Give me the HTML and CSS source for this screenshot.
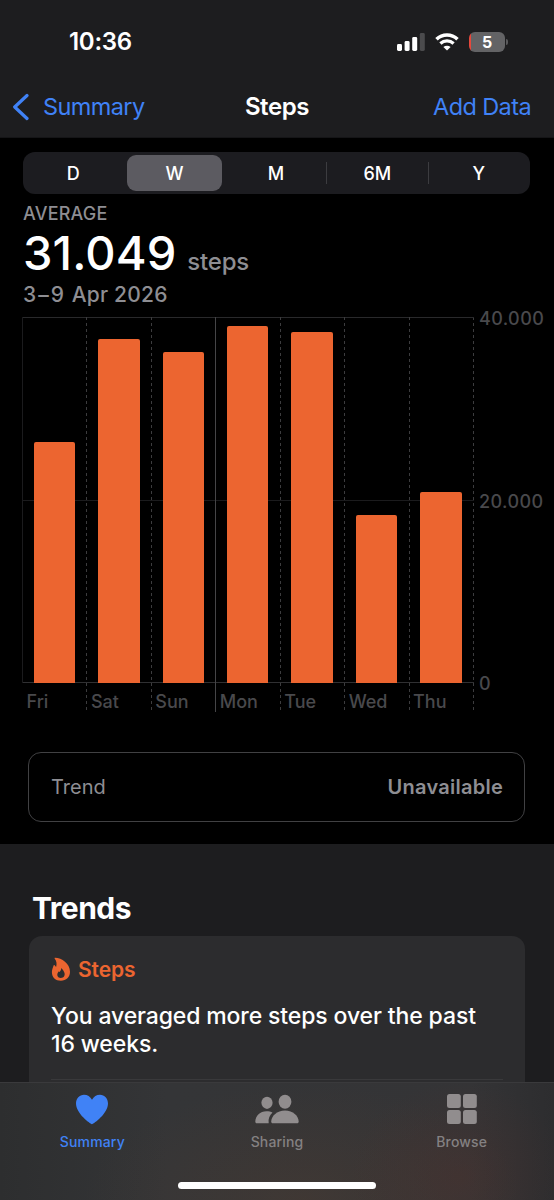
FILE: index.html
```html
<!DOCTYPE html>
<html lang="en">
<head>
    <meta charset="UTF-8">
    <meta name="viewport" content="width=device-width, initial-scale=1.0">
    <title>Steps</title>
    <link rel="stylesheet" href="styles.css">
</head>
<body>
    <div class="phone">
        <header class="top">
            <div class="status-bar">
                <span class="time">10:36</span>
                <div class="status-icons">
                    <svg class="signal" width="28" height="18" viewBox="0 0 28 18">
                        <rect x="0" y="11" width="5" height="7" rx="1.4" fill="#fff"/>
                        <rect x="7.6" y="8" width="5" height="10" rx="1.4" fill="#fff"/>
                        <rect x="15.2" y="4" width="5" height="14" rx="1.4" fill="#fff"/>
                        <rect x="22.8" y="0" width="5" height="18" rx="1.4" fill="#4b4b4d"/>
                    </svg>
                    <svg class="wifi" width="24" height="18" viewBox="0 0 24 18">
                        <path d="M1.5 6.2a15.2 15.2 0 0 1 21 0" fill="none" stroke="#fff" stroke-width="3.6"/>
                        <path d="M5.4 10.5a9.6 9.6 0 0 1 13.2 0" fill="none" stroke="#fff" stroke-width="3.2"/>
                        <path d="M12 17.6l-3.6-3.5a5.2 5.2 0 0 1 7.2 0z" fill="#fff"/>
                    </svg>
                    <div class="battery"><span class="battery-level">5</span></div>
                </div>
            </div>
            <nav class="nav-bar">
                <a class="back">
                    <svg width="17" height="28" viewBox="0 0 17 28"><path d="M15 2.5L2.7 14l12.3 11.5" fill="none" stroke="#4082f6" stroke-width="3.2" stroke-linecap="round" stroke-linejoin="round"/></svg>
                    <span class="back-text">Summary</span>
                </a>
                <h1>Steps</h1>
                <a class="add">Add Data</a>
            </nav>
        </header>

        <main>
            <section class="overview">
                <div class="segments">
                    <button class="segment">D</button>
                    <button class="segment active">W</button>
                    <button class="segment">M</button>
                    <button class="segment divided">6M</button>
                    <button class="segment divided">Y</button>
                </div>

                <div class="summary">
                    <p class="summary-label">AVERAGE</p>
                    <p class="summary-value"><span class="number">31.049</span><span class="unit">steps</span></p>
                    <p class="summary-date"><span class="range">3–9</span> Apr 2026</p>
                </div>

                <div class="chart">
                    <div class="days">
                        <div class="day first"><div class="plot"><div class="bar" style="height: 241px"></div></div><span>Fri</span></div>
                        <div class="day"><div class="plot"><div class="bar" style="height: 344.5px"></div></div><span>Sat</span></div>
                        <div class="day"><div class="plot"><div class="bar" style="height: 331px"></div></div><span>Sun</span></div>
                        <div class="day week-start"><div class="plot"><div class="bar" style="height: 357px"></div></div><span>Mon</span></div>
                        <div class="day"><div class="plot"><div class="bar" style="height: 351px"></div></div><span>Tue</span></div>
                        <div class="day"><div class="plot"><div class="bar" style="height: 168px"></div></div><span>Wed</span></div>
                        <div class="day"><div class="plot"><div class="bar" style="height: 191px"></div></div><span>Thu</span></div>
                    </div>
                    <div class="axis">
                        <span>40.000</span>
                        <span>20.000</span>
                        <span>0</span>
                    </div>
                </div>

                <div class="trend-box">
                    <span>Trend</span>
                    <span class="trend-value">Unavailable</span>
                </div>
            </section>

            <section class="trends">
                <h2>Trends</h2>
                <div class="card">
                    <div class="card-title">
                        <svg width="20" height="25" viewBox="0 0 20 25">
                            <path fill="#ec6530" fill-rule="evenodd" d="M4.2.7C10.6.9 19 6.3 19 14.8c0 5.4-3.8 9-9.1 9S.9 20.3.9 15.3c0-2.7 1-4.5 1.6-6.6.1-.8.8-.8 1.3-.3.5.5.9 1 1.3 1.6C6.1 6.700 5.500 4 3.800 1.800 3.400 1.200 3.500.7 4.200.7zM10.200 11c.3 2-1.200 3.300-1.800 4.100-.4-.5-.7-.8-1.100-.2-2 2.700-.8 6 2.500 6 3.200 0 4.600-2.800 3.500-5.400-.6-1.600-1.800-3.400-3.100-4.500z"/>
                        </svg>
                        <span>Steps</span>
                    </div>
                    <p class="card-text">You averaged more steps over the past<br>16 weeks.</p>
                    <hr>
                </div>
            </section>
        </main>

        <footer class="tab-bar">
            <a class="tab selected">
                <svg width="46" height="32" viewBox="0 0 46 32"><path fill="#4082f6" d="M23 31.2C21 30.6 7 20.5 7 10.5 7 5.3 10.5 1.7 15 1.7c3.5 0 6.3 1.9 8 5 1.7-3.1 4.5-5 8-5 4.5 0 8 3.6 8 8.8 0 10-14 20.1-16 20.7z"/></svg>
                <span>Summary</span>
            </a>
            <a class="tab">
                <svg width="46" height="32" viewBox="0 0 46 32" fill="#918d8e">
                    <ellipse cx="13" cy="9.8" rx="5.6" ry="6.1"/>
                    <ellipse cx="31" cy="8.7" rx="6.4" ry="7"/>
                    <path d="M1.3 28.5C1.5 23 6 18.2 12.5 18.2c2.4 0 4.4.5 6 1.4-2.9 2.7-4.5 6.2-3.8 10.7H3c-1.2 0-1.7-.7-1.7-1.8z"/>
                    <path d="M17.2 28.5c.2-5.8 5.8-11.1 13.800-11.100s13.500 5.300 13.700 11.100c0 1.100-.6 1.800-1.800 1.800H19c-1.200 0-1.800-.7-1.800-1.800z"/>
                </svg>
                <span>Sharing</span>
            </a>
            <a class="tab">
                <svg width="46" height="32" viewBox="0 0 46 32" fill="#918d8e">
                    <rect x="8" y="1" width="13.8" height="14" rx="2.5"/>
                    <rect x="24" y="1" width="13.8" height="14" rx="2.5"/>
                    <rect x="8" y="17" width="13.8" height="14" rx="2.5"/>
                    <rect x="24" y="17" width="13.8" height="14" rx="2.5"/>
                </svg>
                <span>Browse</span>
            </a>
            <div class="home-indicator"></div>
        </footer>
    </div>
</body>
</html>
```
FILE: styles.css
```css
* {
    box-sizing: border-box;
}

body {
    margin: 0;
    background: #000;
    color: #fff;
    font-family: Inter, "Liberation Sans", sans-serif;
}

h1, h2, p {
    margin: 0;
}

.phone {
    width: 554px;
    height: 1200px;
    display: flex;
    flex-direction: column;
    overflow: hidden;
}

/* header */
.top {
    height: 138px;
    flex: none;
    background: #1d1d1f;
    border-bottom: 1px solid #151517;
}

.status-bar {
    height: 77px;
    padding: 6px 46px 0 69px;
    display: flex;
    align-items: center;
    justify-content: space-between;
}

.time {
    font-size: 24px;
    font-weight: 600;
    letter-spacing: -0.3px;
}

.status-icons {
    display: flex;
    align-items: center;
    gap: 10px;
}

.battery {
    position: relative;
    width: 36px;
    height: 20px;
    margin-right: 3px;
    border-radius: 6px;
    background: linear-gradient(to right, #e5483c 2px, #636365 2px);
    text-align: center;
    font-size: 16px;
    font-weight: 700;
    line-height: 20px;
}

.battery::after {
    content: "";
    position: absolute;
    left: 37px;
    top: 7px;
    width: 2px;
    height: 6px;
    border-radius: 0 2px 2px 0;
    background: #59595b;
}

.nav-bar {
    height: 59px;
    padding: 0 23px 0 12px;
    display: grid;
    grid-template-columns: 1fr auto 1fr;
    align-items: center;
    font-size: 23.5px;
    letter-spacing: -0.6px;
    color: #4082f6;
}

.back {
    display: flex;
    align-items: center;
    gap: 14px;
}

h1 {
    padding-left: 11px;
    font-size: 24px;
    font-weight: 600;
    letter-spacing: -0.4px;
    color: #fff;
}

.add {
    text-align: right;
}

/* chart section */
.overview {
    height: 706px;
    padding: 14px 24px 0 23px;
}

.segments {
    height: 42px;
    display: grid;
    grid-template-columns: repeat(5, 1fr);
    align-items: center;
    border-radius: 12px;
    background: #1c1c20;
}

.segment {
    height: 36px;
    margin: 0 4px 0 3px;
    padding: 0;
    border: none;
    border-radius: 9px;
    background: none;
    color: #fff;
    font-family: inherit;
    font-size: 18px;
    font-weight: 500;
}

.segment.active {
    background: #5c5b61;
}

.segment.divided {
    height: 22px;
    margin: 0 1px 0 -1px;
    border-left: 1px solid #3c3c40;
    border-radius: 0;
}

.summary {
    height: 123px;
    padding-top: 9px;
    color: #8e8e93;
}

.summary-label {
    font-size: 18px;
    font-weight: 500;
    letter-spacing: 0.2px;
    line-height: 22px;
}

.summary-value {
    display: flex;
    align-items: baseline;
    gap: 11px;
    margin-top: 7px;
    line-height: 42px;
}

.number {
    color: #fff;
    font-size: 47px;
    font-weight: 500;
    letter-spacing: 0.1px;
}

.unit {
    font-size: 24px;
    font-weight: 500;
    letter-spacing: -0.2px;
}

.summary-date {
    font-size: 21px;
    font-weight: 500;
    letter-spacing: 0.2px;
    line-height: 24px;
}

.range {
    letter-spacing: 2px;
}

.chart {
    display: flex;
    height: 395px;
    margin-left: -1px;
}

.days {
    width: 452px;
    flex: none;
    display: grid;
    grid-template-columns: repeat(7, 1fr);
    border-right: 1px solid transparent;
    background:
        linear-gradient(#29292b, #29292b) 0 0 / 100% 1px no-repeat,
        linear-gradient(#1b1b1d, #1b1b1d) 0 183px / 100% 1px no-repeat,
        linear-gradient(#303032, #303032) 0 365px / 100% 1px no-repeat,
        repeating-linear-gradient(#3c3c3e 0 3px, #000 3px 6px) 451px 0 / 1px 100% no-repeat;
    background-origin: border-box;
}

.day {
    background: repeating-linear-gradient(#3c3c3e 0 3px, transparent 3px 6px) 0 0 / 1px 100% no-repeat;
}

.day.first {
    background: linear-gradient(#1b1b1d, #1b1b1d) 0 0 / 1px 366px no-repeat;
}

.day.week-start {
    background: linear-gradient(#454547, #454547) 0 0 / 1px 100% no-repeat;
}

.plot {
    height: 366px;
    padding-left: 0.4px;
    display: flex;
    align-items: flex-end;
    justify-content: center;
}

.bar {
    width: 41.5px;
    border-radius: 2px 2px 0 0;
    background: #ec6530;
}

.day span {
    display: block;
    height: 29px;
    padding-left: 4.5px;
    color: #49494c;
    font-size: 18px;
    font-weight: 500;
    line-height: 38px;
}

.axis {
    height: 386px;
    margin: -9px 0 0 5px;
    display: flex;
    flex-direction: column;
    justify-content: space-between;
    color: #49494c;
    font-size: 18px;
    font-weight: 500;
    letter-spacing: 0.4px;
    line-height: 21px;
}

.trend-box {
    height: 70px;
    margin: 40px 5px 0;
    padding: 0 21px 0 22px;
    display: flex;
    align-items: center;
    justify-content: space-between;
    border: 1px solid #414143;
    border-radius: 13px;
    color: #8e8e93;
    font-size: 20px;
}

.trend-value {
    font-weight: 600;
    letter-spacing: 0.25px;
}

/* trends */
.trends {
    height: 238px;
    padding: 44px 29px 0;
    overflow: hidden;
    background: #1d1d1f;
}

h2 {
    padding-left: 3px;
    font-size: 30px;
    font-weight: 700;
    letter-spacing: -0.5px;
    line-height: 40px;
}

.card {
    height: 180px;
    margin-top: 8px;
    padding: 21px 22px 0;
    border-radius: 13px 13px 0 0;
    background: #2c2c2e;
}

.card-title {
    height: 25px;
    display: flex;
    align-items: center;
    gap: 7px;
    color: #ec6530;
    font-size: 21px;
    font-weight: 600;
    letter-spacing: -0.1px;
}

.card-text {
    margin-top: 20px;
    font-size: 23px;
    font-weight: 500;
    letter-spacing: -0.12px;
    line-height: 28px;
}

.card hr {
    height: 1px;
    margin: 21px 0 0;
    border: none;
    background: #39393b;
}

/* tab bar */
.tab-bar {
    height: 118px;
    flex: none;
    padding-top: 10px;
    display: grid;
    grid-template-columns: repeat(3, 1fr);
    align-content: start;
    border-top: 1px solid #3a3a3c;
    background:
        radial-gradient(ellipse 110px 95px at 83% 80%, rgba(80, 48, 43, 0.38), transparent),
        radial-gradient(ellipse 220px 115px at 55% 100%, rgba(85, 62, 47, 0.35), transparent),
        linear-gradient(to right, #2d2e2f, #343537 30%, #343436 85%, #2d2d2f);
}

.tab {
    height: 89px;
    display: flex;
    flex-direction: column;
    align-items: center;
    color: #848182;
    font-size: 14px;
    font-weight: 500;
    letter-spacing: 0.15px;
}

.tab span {
    margin-top: 8px;
    line-height: 17px;
}

.tab.selected {
    color: #4082f6;
}

.home-indicator {
    grid-column: 1 / -1;
    justify-self: center;
    width: 198px;
    height: 7px;
    border-radius: 4px;
    background: #fff;
}
```
